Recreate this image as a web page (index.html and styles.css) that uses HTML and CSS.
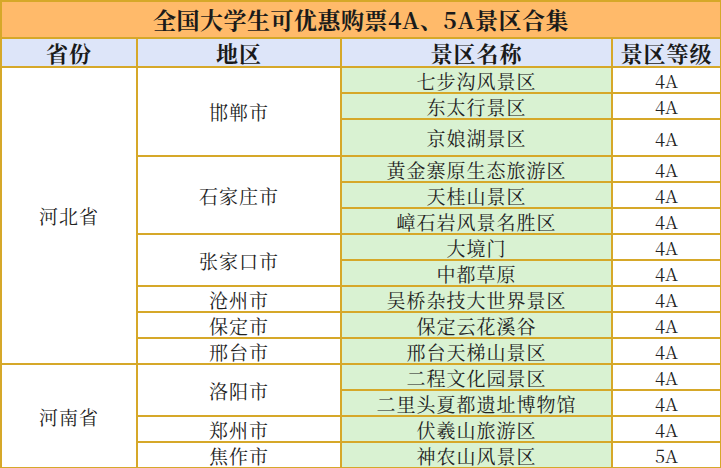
FILE: index.html
```
<!DOCTYPE html>
<html lang="zh-CN">
<head>
<meta charset="utf-8">
<link rel="stylesheet" href="styles.css">
</head>
<body>
<table class="sheet">
  <colgroup>
    <col class="c1"><col class="c2"><col class="c3"><col class="c4">
  </colgroup>
  <tr class="r-title"><td colspan="4" class="title">全国大学生可优惠购票4A、5A景区合集</td></tr>
  <tr class="r-head">
    <th>省份</th><th>地区</th><th>景区名称</th><th>景区等级</th>
  </tr>
  <tr class="r"><td rowspan="11" class="prov">河北省</td><td rowspan="3" class="city">邯郸市</td><td class="spot">七步沟风景区</td><td class="lvl">4A</td></tr>
  <tr class="r"><td class="spot">东太行景区</td><td class="lvl">4A</td></tr>
  <tr class="r tall"><td class="spot">京娘湖景区</td><td class="lvl">4A</td></tr>
  <tr class="r"><td rowspan="3" class="city">石家庄市</td><td class="spot">黄金寨原生态旅游区</td><td class="lvl">4A</td></tr>
  <tr class="r"><td class="spot">天桂山景区</td><td class="lvl">4A</td></tr>
  <tr class="r"><td class="spot">嶂石岩风景名胜区</td><td class="lvl">4A</td></tr>
  <tr class="r"><td rowspan="2" class="city">张家口市</td><td class="spot">大境门</td><td class="lvl">4A</td></tr>
  <tr class="r"><td class="spot">中都草原</td><td class="lvl">4A</td></tr>
  <tr class="r"><td class="city">沧州市</td><td class="spot">吴桥杂技大世界景区</td><td class="lvl">4A</td></tr>
  <tr class="r"><td class="city">保定市</td><td class="spot">保定云花溪谷</td><td class="lvl">4A</td></tr>
  <tr class="r"><td class="city">邢台市</td><td class="spot">邢台天梯山景区</td><td class="lvl">4A</td></tr>
  <tr class="r"><td rowspan="4" class="prov">河南省</td><td rowspan="2" class="city">洛阳市</td><td class="spot">二程文化园景区</td><td class="lvl">4A</td></tr>
  <tr class="r"><td class="spot">二里头夏都遗址博物馆</td><td class="lvl">4A</td></tr>
  <tr class="r"><td class="city">郑州市</td><td class="spot">伏羲山旅游区</td><td class="lvl">4A</td></tr>
  <tr class="r"><td class="city">焦作市</td><td class="spot">神农山风景区</td><td class="lvl">5A</td></tr>
</table>
</body>
</html>
```
FILE: styles.css
```
html, body {
  margin: 0;
  padding: 0;
  background: #ffffff;
}
.sheet {
  border-collapse: collapse;
  table-layout: fixed;
  width: 720px;
  font-family: "Noto Serif CJK SC", "Noto Sans CJK SC", serif;
  color: #222222;
}
.c1 { width: 136px; }
.c2 { width: 204px; }
.c3 { width: 271px; }
.c4 { width: 109px; }
.sheet td, .sheet th {
  border: 2px solid #D6A829;
  padding: 0;
  text-align: center;
  vertical-align: middle;
  line-height: 1;
  white-space: nowrap;
  overflow: hidden;
}
.r-title { height: 37px; }
.title {
  background: #FFBA6A;
  font-size: 23px;
  font-weight: 700;
  color: #1a1a1a;
  border-color: #E6A43B;
  letter-spacing: 0.5px;
}
.r-head { height: 29px; }
.r-head th {
  background: #DDE5F9;
  font-size: 22px;
  font-weight: 700;
  letter-spacing: 1px;
  color: #1a1a1a;
}
.r { height: 26px; }
.r.tall { height: 37px; }
.prov, .city {
  background: #ffffff;
  font-size: 19px;
  letter-spacing: 1px;
  font-weight: 400;
}
.spot {
  background: #D9F2D2;
  font-size: 19px;
  letter-spacing: 1px;
}
.lvl {
  background: #ffffff;
  font-size: 18px;
}
```
